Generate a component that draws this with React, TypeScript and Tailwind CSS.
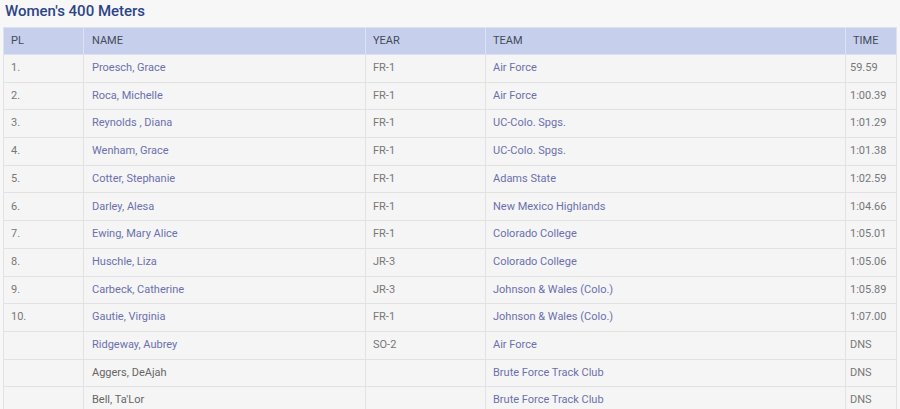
const results = [
  { pl: "1.", name: "Proesch, Grace", year: "FR-1", team: "Air Force", time: "59.59", link: true },
  { pl: "2.", name: "Roca, Michelle", year: "FR-1", team: "Air Force", time: "1:00.39", link: true },
  { pl: "3.", name: "Reynolds , Diana", year: "FR-1", team: "UC-Colo. Spgs.", time: "1:01.29", link: true },
  { pl: "4.", name: "Wenham, Grace", year: "FR-1", team: "UC-Colo. Spgs.", time: "1:01.38", link: true },
  { pl: "5.", name: "Cotter, Stephanie", year: "FR-1", team: "Adams State", time: "1:02.59", link: true },
  { pl: "6.", name: "Darley, Alesa", year: "FR-1", team: "New Mexico Highlands", time: "1:04.66", link: true },
  { pl: "7.", name: "Ewing, Mary Alice", year: "FR-1", team: "Colorado College", time: "1:05.01", link: true },
  { pl: "8.", name: "Huschle, Liza", year: "JR-3", team: "Colorado College", time: "1:05.06", link: true },
  { pl: "9.", name: "Carbeck, Catherine", year: "JR-3", team: "Johnson & Wales (Colo.)", time: "1:05.89", link: true },
  { pl: "10.", name: "Gautie, Virginia", year: "FR-1", team: "Johnson & Wales (Colo.)", time: "1:07.00", link: true },
  { pl: "", name: "Ridgeway, Aubrey", year: "SO-2", team: "Air Force", time: "DNS", link: true },
  { pl: "", name: "Aggers, DeAjah", year: "", team: "Brute Force Track Club", time: "DNS", link: false },
  { pl: "", name: "Bell, Ta'Lor", year: "", team: "Brute Force Track Club", time: "DNS", link: false },
];

export default function App() {
  return (
    <div className="min-h-[409px] bg-[#f7f7f7] font-['Roboto',sans-serif]">
      <h3 className="px-[5px] pt-[1px] h-[26px] text-[15px] font-medium leading-[20px] text-[#2e4488]">
        Women's 400 Meters
      </h3>
      <div className="px-[3px] pt-[1px]">
        <table className="w-full table-fixed border-collapse text-[11px]">
          <colgroup>
            <col className="w-[80px]" />
            <col className="w-[282px]" />
            <col className="w-[120px]" />
            <col className="w-[360px]" />
            <col />
          </colgroup>
          <thead>
            <tr className="h-[27px] bg-[#c6d0ec] text-left text-[#444a5a]">
              <th className="border border-[#dde2f0] pl-[7px] font-normal">PL</th>
              <th className="border border-[#dde2f0] pl-[8px] font-normal">NAME</th>
              <th className="border border-[#dde2f0] pl-[7px] font-normal">YEAR</th>
              <th className="border border-[#dde2f0] pl-[7px] font-normal">TEAM</th>
              <th className="border border-[#dde2f0] pl-[7px] font-normal">TIME</th>
            </tr>
          </thead>
          <tbody>
            {results.map((r) => (
              <tr key={r.name} className="h-[27.7px] bg-[#f5f5f5] text-[#777]">
                <td className="border border-[#e2e2e2] pl-[7px]">{r.pl}</td>
                <td className={"border border-[#e2e2e2] pl-[8px] " + (r.link ? "text-[#6b70ad]" : "text-[#666]")}>
                  {r.name}
                </td>
                <td className="border border-[#e2e2e2] pl-[7px]">{r.year}</td>
                <td className="border border-[#e2e2e2] pl-[7px] text-[#6b70ad]">{r.team}</td>
                <td className="border border-[#e2e2e2] pl-[4px]">{r.time}</td>
              </tr>
            ))}
          </tbody>
        </table>
      </div>
    </div>
  );
}
